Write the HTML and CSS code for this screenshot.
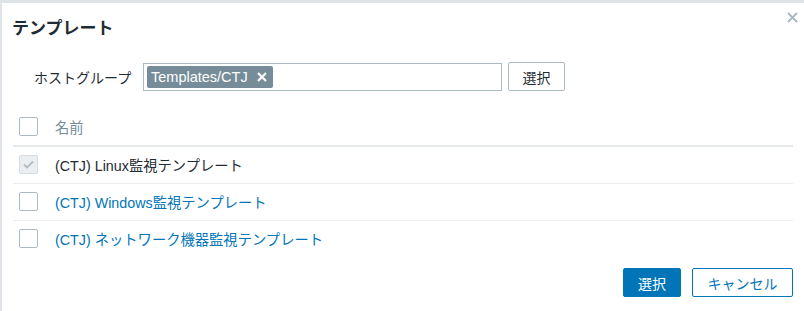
FILE: index.html
```html
<!DOCTYPE html>
<html lang="ja">
<head>
  <meta charset="UTF-8">
  <title>テンプレート</title>
  <link rel="stylesheet" href="styles.css">
</head>
<body>
<div class="dialog">
  <div class="dialog-head">
    <h4>テンプレート</h4>
    <span class="btn-close" title="閉じる">
      <svg width="11" height="11" viewBox="0 0 11 11"><path d="M1 1L10 10M10 1L1 10" stroke="#a9b7bf" stroke-width="1.8"/></svg>
    </span>
  </div>
  <div class="dialog-body">
    <div class="filter">
      <label class="filter-label">ホストグループ</label>
      <div class="multiselect">
        <span class="tag">Templates/CTJ
          <svg width="10" height="10" viewBox="0 0 10 10"><path d="M1 1L9 9M9 1L1 9" stroke="#fff" stroke-width="2.2"/></svg>
        </span>
      </div>
      <button class="btn-alt">選択</button>
    </div>
    <table class="list">
      <thead>
        <tr>
          <th class="cell-check"><span class="checkbox"></span></th>
          <th>名前</th>
        </tr>
      </thead>
      <tbody>
        <tr>
          <td class="cell-check"><span class="checkbox checked"><svg width="11" height="9" viewBox="0 0 11 9"><path d="M1 4.5L4 7.5L10 1.5" fill="none" stroke="#b0bcc3" stroke-width="1.8"/></svg></span></td>
          <td>(CTJ) Linux監視テンプレート</td>
        </tr>
        <tr>
          <td class="cell-check"><span class="checkbox"></span></td>
          <td><a href="#">(CTJ) Windows監視テンプレート</a></td>
        </tr>
        <tr>
          <td class="cell-check"><span class="checkbox"></span></td>
          <td><a href="#">(CTJ) ネットワーク機器監視テンプレート</a></td>
        </tr>
      </tbody>
    </table>
  </div>
  <div class="dialog-foot">
    <button class="btn-main">選択</button>
    <button class="btn-cancel">キャンセル</button>
  </div>
</div>
</body>
</html>
```
FILE: styles.css
```css
* {
  margin: 0;
  padding: 0;
  box-sizing: border-box;
}

html, body {
  height: 100%;
}

body {
  background: #dfe4e8;
  font-family: "Liberation Sans", "Noto Sans CJK JP", sans-serif;
  font-size: 14.3px;
  color: #1f2c33;
  overflow: hidden;
}

.dialog {
  margin: 3px 0 0 2px;
  height: 100%;
  background: #fff;
}

.dialog-head {
  display: flex;
  justify-content: space-between;
  padding: 15px 6px 0 10px;
  height: 44px;
}

.dialog-head h4 {
  font-size: 17px;
  font-weight: bold;
  line-height: 20px;
  margin-top: 1px;
}

.btn-close {
  margin-top: -8px;
  cursor: pointer;
}

.dialog-body {
  padding: 15px 9px 0 11px;
}

.filter {
  display: flex;
  align-items: center;
}

.filter-label {
  width: 130px;
  padding-left: 21px;
  font-size: 14px;
  white-space: nowrap;
}

.multiselect {
  width: 359px;
  height: 28px;
  border: 1px solid #acbbc2;
  padding: 2px 3px;
  display: flex;
  align-items: center;
}

.tag {
  display: inline-flex;
  align-items: center;
  gap: 9px;
  height: 22px;
  padding: 0 6px 0 4px;
  background: #768d99;
  color: #fff;
  border-radius: 2px;
  font-size: 14.5px;
}

button {
  font-family: inherit;
  font-size: 14px;
  height: 29px;
  border-radius: 2px;
  cursor: pointer;
}

.btn-alt {
  margin-left: 6px;
  width: 57px;
  background: #fff;
  border: 1px solid #acbbc2;
  color: #1f2c33;
}

.list {
  width: 780px;
  border-collapse: collapse;
  margin-top: 17px;
}

.list th {
  text-align: left;
  font-weight: normal;
  color: #768d99;
  height: 38px;
  border-bottom: 2px solid #e5e9ec;
}

.list td {
  height: 37px;
  border-bottom: 1px solid #ebeef0;
}

.list tr:last-child td {
  border-bottom: 0;
}

.cell-check {
  width: 42px;
  padding-left: 6px;
}

.checkbox {
  display: flex;
  align-items: center;
  justify-content: center;
  width: 19px;
  height: 19px;
  border: 1px solid #acbbc2;
  border-radius: 2px;
  background: #fff;
}

.checkbox.checked {
  background: #ebeef0;
  border-color: #d5dde1;
}

.list a {
  color: #0275b8;
  text-decoration: none;
}

.dialog-foot {
  display: flex;
  justify-content: flex-end;
  gap: 11px;
  padding: 11px 11px 0 0;
}

.btn-main {
  width: 58px;
  background: #0275b8;
  border: 1px solid #0275b8;
  color: #fff;
}

.btn-cancel {
  width: 101px;
  background: #fff;
  border: 1px solid #0275b8;
  color: #0275b8;
}
```
